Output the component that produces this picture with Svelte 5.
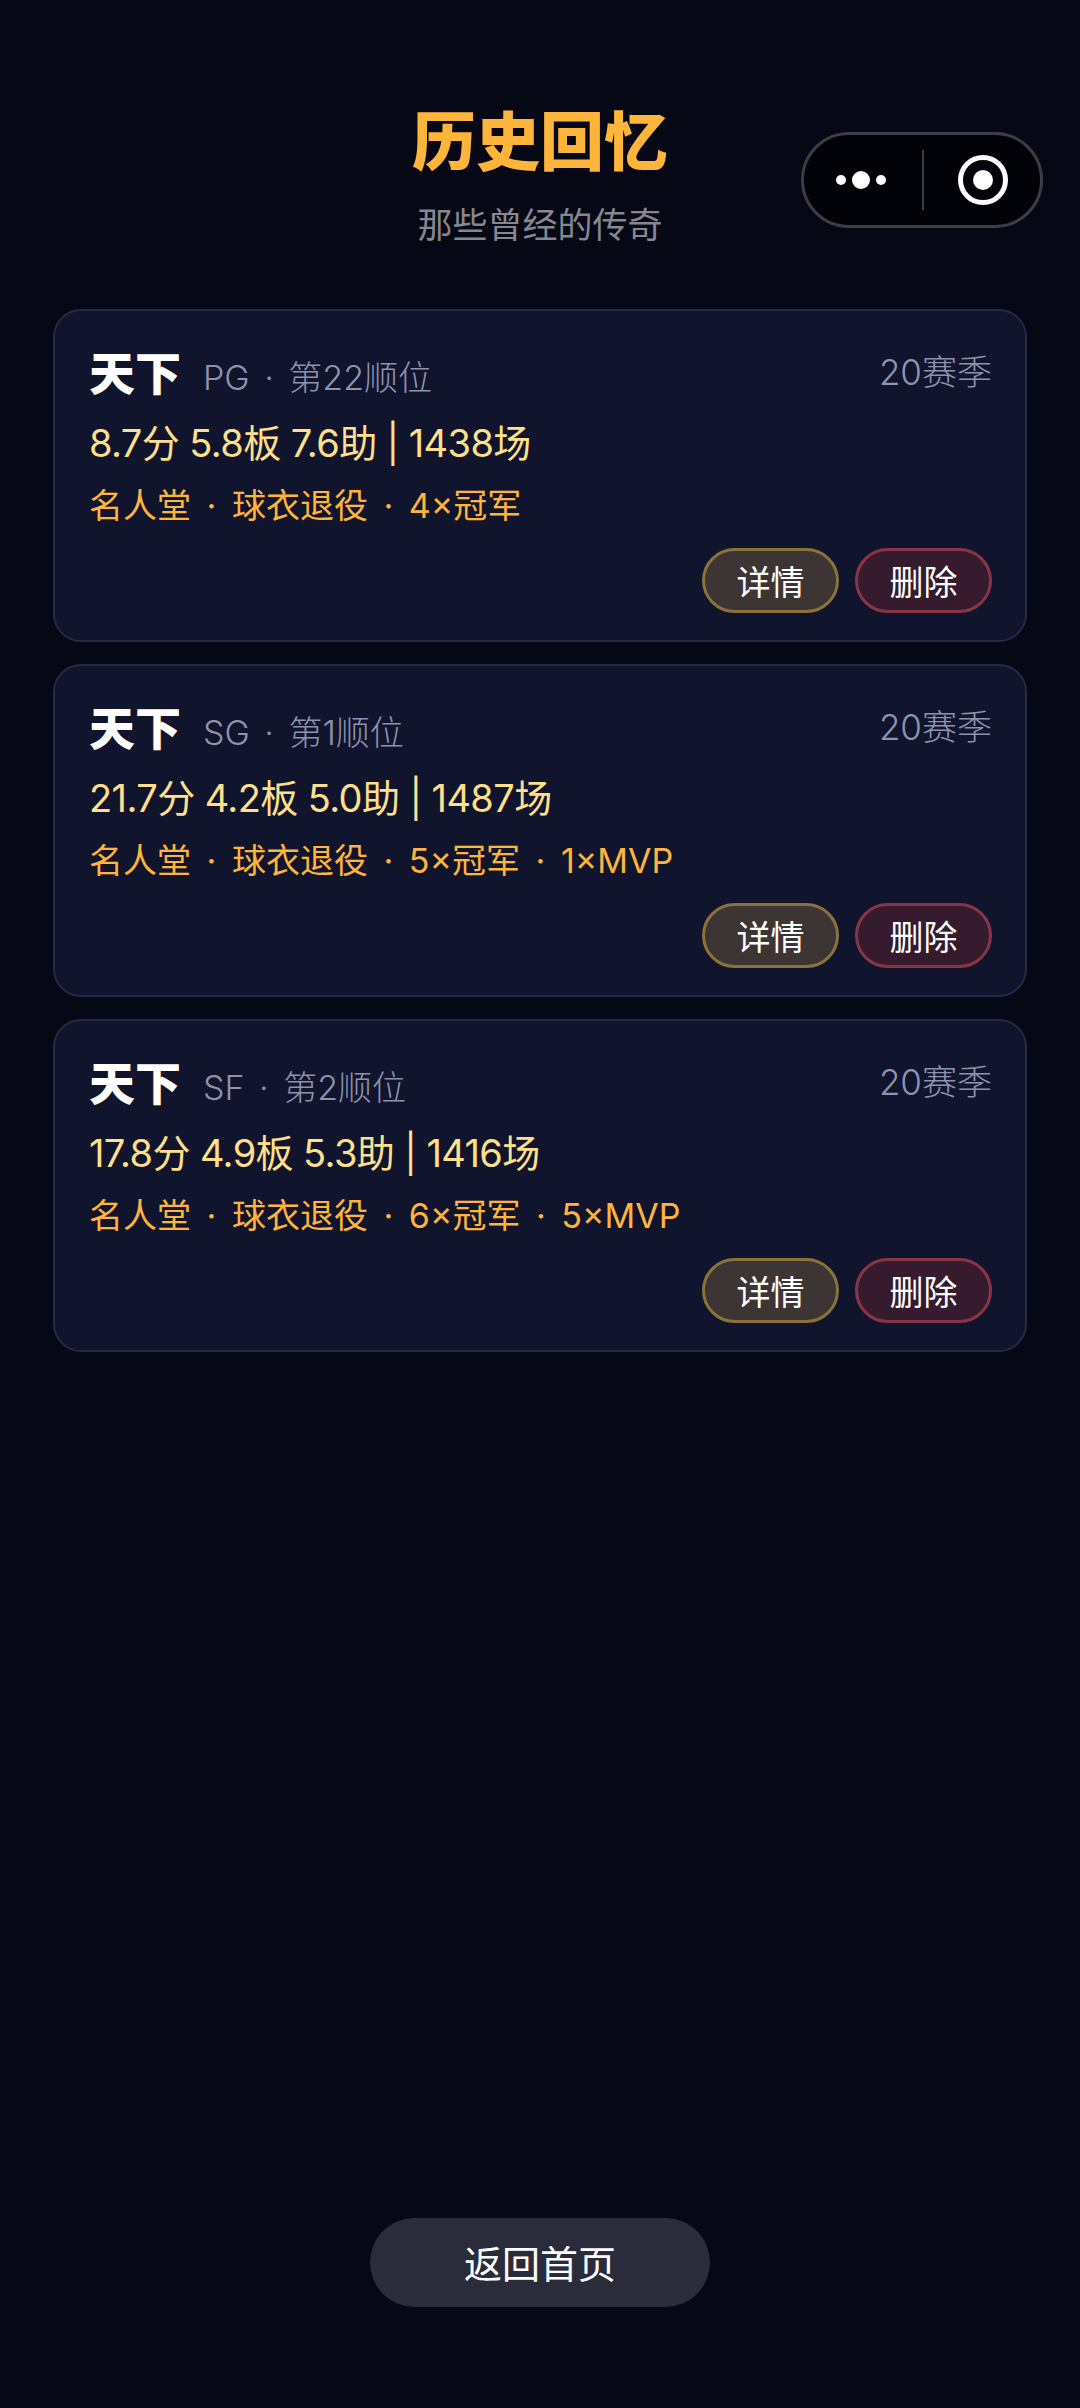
<script>
    const players = [
        { name: "天下", pos: "PG", pick: "第22顺位", season: "20赛季", stats: "8.7分 5.8板 7.6助 | 1438场", tags: ["名人堂", "球衣退役", "4×冠军"] },
        { name: "天下", pos: "SG", pick: "第1顺位", season: "20赛季", stats: "21.7分 4.2板 5.0助 | 1487场", tags: ["名人堂", "球衣退役", "5×冠军", "1×MVP"] },
        { name: "天下", pos: "SF", pick: "第2顺位", season: "20赛季", stats: "17.8分 4.9板 5.3助 | 1416场", tags: ["名人堂", "球衣退役", "6×冠军", "5×MVP"] }
    ];
</script>

<div class="page">
    <div class="capsule">
        <div class="dots">
            <span class="dot"></span>
            <span class="dot big"></span>
            <span class="dot"></span>
        </div>
        <div class="divider"></div>
        <div class="target"><span></span></div>
    </div>

    <header class="header">
        <h1>历史回忆</h1>
        <p>那些曾经的传奇</p>
    </header>

    <div class="list">
        {#each players as p}
            <div class="card">
                <div class="top">
                    <div class="who">
                        <span class="name">{p.name}</span>
                        <span class="meta">{p.pos} · {p.pick}</span>
                    </div>
                    <span class="season">{p.season}</span>
                </div>
                <div class="stats">{p.stats}</div>
                <div class="tags">{p.tags.join(" · ")}</div>
                <div class="actions">
                    <button class="btn detail">详情</button>
                    <button class="btn del">删除</button>
                </div>
            </div>
        {/each}
    </div>

    <button class="home">返回首页</button>
</div>

<style>
    :global(body) {
        background: #060815;
    }
    .page {
        position: relative;
        display: flex;
        flex-direction: column;
        box-sizing: border-box;
        height: 2408px;
        padding: 104px 53px 101px;
        background: #060815;
        font-family: Inter, "Noto Sans CJK SC", sans-serif;
        color: #fff;
    }
    .capsule {
        position: absolute;
        top: 132px;
        left: 801px;
        box-sizing: border-box;
        width: 242px;
        height: 96px;
        display: flex;
        align-items: center;
        border: 3px solid #3c3d46;
        border-radius: 48px;
        background: #020308;
    }
    .dots {
        flex: 1;
        display: flex;
        justify-content: center;
        align-items: center;
        gap: 6px;
        padding-right: 4px;
    }
    .dot {
        width: 10px;
        height: 10px;
        border-radius: 50%;
        background: #fff;
    }
    .dot.big {
        width: 18px;
        height: 18px;
    }
    .divider {
        width: 2px;
        height: 60px;
        background: #3c3d46;
    }
    .target {
        flex: 1;
        display: flex;
        justify-content: center;
        align-items: center;
        padding-left: 3px;
    }
    .target span {
        box-sizing: border-box;
        width: 50px;
        height: 50px;
        border: 5px solid #fff;
        border-radius: 50%;
        display: flex;
        justify-content: center;
        align-items: center;
    }
    .target span::after {
        content: "";
        width: 20px;
        height: 20px;
        border-radius: 50%;
        background: #fff;
    }
    .header {
        text-align: center;
    }
    .header h1 {
        margin: 0;
        font-size: 64px;
        line-height: 76px;
        font-weight: 900;
        color: #ffb43a;
    }
    .header p {
        margin: 20px 0 0;
        font-size: 35px;
        line-height: 50px;
        color: #86878f;
    }
    .list {
        display: flex;
        flex-direction: column;
        gap: 22px;
        margin-top: 59px;
    }
    .card {
        box-sizing: border-box;
        height: 333px;
        padding: 30px 33px 26px 34px;
        border: 2px solid #262a42;
        border-radius: 28px;
        background: #10142c;
    }
    .top {
        display: flex;
        justify-content: space-between;
        align-items: flex-start;
    }
    .who {
        display: flex;
        align-items: baseline;
        gap: 22px;
    }
    .name {
        font-size: 46px;
        line-height: 64px;
        font-weight: 900;
    }
    .meta {
        font-size: 34px;
        font-weight: 300;
        word-spacing: 5px;
        color: #9093ad;
    }
    .season {
        margin-top: 6px;
        font-size: 35px;
        line-height: 50px;
        font-weight: 300;
        color: #9093ad;
    }
    .stats {
        margin-top: 10px;
        font-size: 38px;
        line-height: 56px;
        letter-spacing: -0.6px;
        color: #ffe08a;
    }
    .tags {
        margin-top: 10px;
        font-size: 34px;
        line-height: 50px;
        color: #ffb43a;
        word-spacing: 6px;
    }
    .actions {
        display: flex;
        justify-content: flex-end;
        gap: 16px;
        margin-top: 17px;
    }
    .btn {
        box-sizing: border-box;
        width: 137px;
        height: 65px;
        padding: 0;
        border-radius: 33px;
        font: inherit;
        font-size: 34px;
        color: #fff;
    }
    .detail {
        border: 3px solid #8a7238;
        background: #3d3533;
    }
    .del {
        border: 3px solid #8a3547;
        background: #361a2e;
    }
    .home {
        align-self: center;
        margin-top: auto;
        width: 340px;
        height: 89px;
        padding: 0 0 3px;
        border: none;
        border-radius: 45px;
        background: #2a2b3b;
        font: inherit;
        font-size: 38px;
        color: #fff;
    }
</style>
